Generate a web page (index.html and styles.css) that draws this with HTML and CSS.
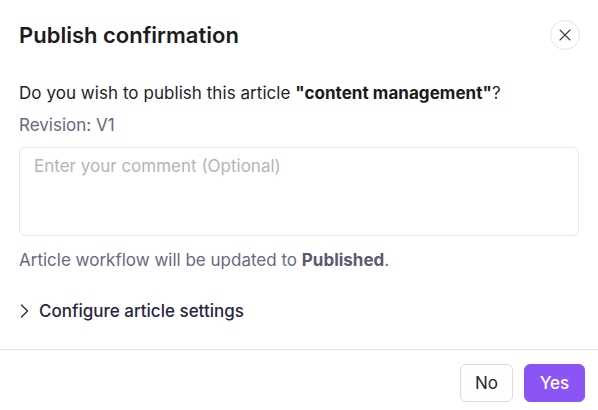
FILE: index.html
```html
<!DOCTYPE html>
<html lang="en">
<head>
<meta charset="utf-8">
<title>Publish confirmation</title>
<link rel="stylesheet" href="styles.css">
</head>
<body>
<div class="dialog">
  <div class="header">
    <h2 class="title">Publish confirmation</h2>
    <button class="close" aria-label="Close">
      <svg width="12" height="12" viewBox="0 0 12 12"><path d="M1 1L11 11M11 1L1 11" stroke="#3a3a3a" stroke-width="1.1" fill="none" stroke-linecap="round"/></svg>
    </button>
  </div>
  <div class="content">
    <p class="question">Do you wish to publish this article <strong>"content management"</strong>?</p>
    <p class="revision">Revision: V1</p>
    <textarea class="comment" placeholder="Enter your comment (Optional)"></textarea>
    <p class="note">Article workflow will be updated to <strong>Published</strong>.</p>
    <div class="settings">
      <svg class="chev" width="10" height="16" viewBox="0 0 10 16"><path d="M2.5 2L8.5 8L2.5 14" stroke="#2a2540" stroke-width="1.3" fill="none" stroke-linecap="round" stroke-linejoin="round"/></svg>
      <span>Configure article settings</span>
    </div>
  </div>
  <div class="footer">
    <button class="btn btn-no">No</button>
    <button class="btn btn-yes">Yes</button>
  </div>
</div>
</body>
</html>
```
FILE: styles.css
```css
* { box-sizing: border-box; }
html, body { margin: 0; padding: 0; background: #fff; }
body { font-family: Inter, "Noto Sans", sans-serif; color: #1f1d2b; }
.dialog { width: 598px; height: 410px; background: #fff; }
.header { display: flex; justify-content: space-between; align-items: center; padding: 20px 18px 0 19px; height: 50px; }
.title { margin: 0; font-size: 22px; line-height: 30px; font-weight: 600; color: #1c1c1e; }
.close { width: 30px; height: 30px; border-radius: 50%; border: 1px solid #e4e4e7; background: #fff; display: flex; align-items: center; justify-content: center; padding: 0; }
.content { padding: 31px 19px 0 19px; }
.content p { margin: 0; font-size: 17px; line-height: 24px; }
.question { color: #1f1d2b; letter-spacing: 0.05px; }
.question strong { font-weight: 700; color: #1a1a1a; }
.revision { margin-top: 8px !important; color: #6b6880; }
.comment { display: block; width: 100%; height: 89px; margin-top: 10px; border: 1px solid #e6e6ea; border-radius: 6px; padding: 6px 14px; font-family: inherit; font-size: 17px; line-height: 24px; resize: none; outline: none; color: #1f1d2b; }
.comment::placeholder { color: #b4b4bb; }
.note { margin-top: 12px !important; color: #6b6880; }
.note strong { font-weight: 700; color: #5c5870; }
.settings { display: flex; align-items: center; gap: 10px; margin-top: 27px; height: 24px; font-size: 17px; line-height: 24px; color: #2a2540; font-weight: 500; }
.footer { margin-top: 26px; border-top: 1px solid #e4e4e7; display: flex; justify-content: flex-end; gap: 11px; padding: 14px 13px 0 0; }
.btn { height: 38px; border-radius: 6px; font-family: inherit; font-size: 17px; padding: 0; }
.btn-no { width: 53px; background: #fff; border: 1px solid #dcdce0; color: #2a2540; }
.btn-yes { width: 61px; background: #8b55f6; border: 1px solid #8b55f6; color: #fff; font-weight: 500; }
```
